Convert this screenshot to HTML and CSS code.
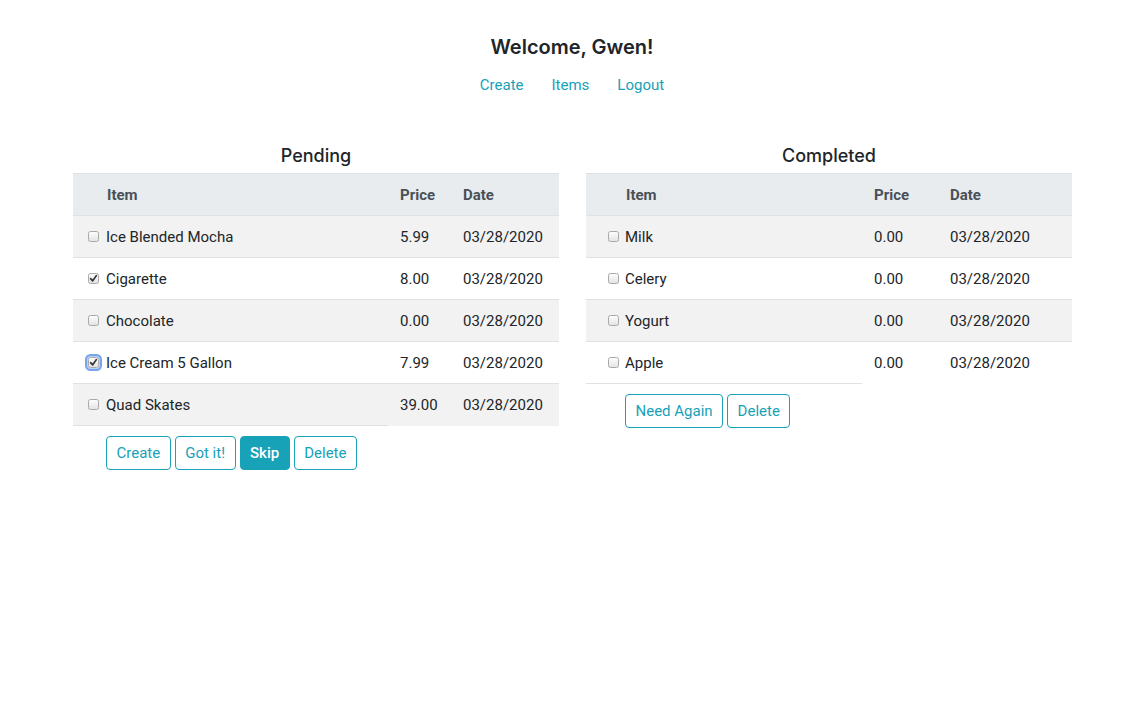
FILE: index.html
```html
<!DOCTYPE html>
<html lang="en">
<head>
<meta charset="utf-8">
<title>Shopping List</title>
<link rel="stylesheet" href="styles.css">
</head>
<body>
<header class="top">
  <h1 class="welcome">Welcome, Gwen!</h1>
  <nav class="nav">
    <a href="#" class="nav-link">Create</a>
    <a href="#" class="nav-link">Items</a>
    <a href="#" class="nav-link">Logout</a>
  </nav>
</header>
<main class="boards">
  <section class="board">
    <h2 class="board-title">Pending</h2>
    <table class="list list-pending">
      <colgroup>
        <col class="c-check"><col class="c-item"><col class="c-price"><col class="c-date">
      </colgroup>
      <thead>
        <tr><th></th><th class="th-item">Item</th><th>Price</th><th>Date</th></tr>
      </thead>
      <tbody>
        <tr><td class="td-check"><span class="cb"></span></td><td class="td-item">Ice Blended Mocha</td><td>5.99</td><td>03/28/2020</td></tr>
        <tr><td class="td-check"><span class="cb cb-on"><svg viewBox="0 0 11 11" width="11" height="11"><path d="M2.6 5.6 L4.6 7.9 L8.4 2.6" fill="none" stroke="#3a3a3a" stroke-width="1.7" stroke-linecap="round" stroke-linejoin="round"/></svg></span></td><td class="td-item">Cigarette</td><td>8.00</td><td>03/28/2020</td></tr>
        <tr><td class="td-check"><span class="cb"></span></td><td class="td-item">Chocolate</td><td>0.00</td><td>03/28/2020</td></tr>
        <tr><td class="td-check"><span class="cb cb-on cb-focus"><svg viewBox="0 0 11 11" width="11" height="11"><path d="M2.6 5.6 L4.6 7.9 L8.4 2.6" fill="none" stroke="#3a3a3a" stroke-width="1.7" stroke-linecap="round" stroke-linejoin="round"/></svg></span></td><td class="td-item">Ice Cream 5 Gallon</td><td>7.99</td><td>03/28/2020</td></tr>
        <tr><td class="td-check"><span class="cb"></span></td><td class="td-item">Quad Skates</td><td>39.00</td><td>03/28/2020</td></tr>
      </tbody>
      <tfoot>
        <tr>
          <td class="td-foot"></td>
          <td class="td-foot td-actions">
            <div class="actions">
              <button class="btn">Create</button>
              <button class="btn">Got it!</button>
              <button class="btn btn-solid">Skip</button>
              <button class="btn">Delete</button>
            </div>
          </td>
        </tr>
      </tfoot>
    </table>
  </section>
  <section class="board">
    <h2 class="board-title">Completed</h2>
    <table class="list list-completed">
      <colgroup>
        <col class="c-check"><col class="c-item"><col class="c-price"><col class="c-date">
      </colgroup>
      <thead>
        <tr><th></th><th class="th-item">Item</th><th>Price</th><th>Date</th></tr>
      </thead>
      <tbody>
        <tr><td class="td-check"><span class="cb"></span></td><td class="td-item">Milk</td><td>0.00</td><td>03/28/2020</td></tr>
        <tr><td class="td-check"><span class="cb"></span></td><td class="td-item">Celery</td><td>0.00</td><td>03/28/2020</td></tr>
        <tr><td class="td-check"><span class="cb"></span></td><td class="td-item">Yogurt</td><td>0.00</td><td>03/28/2020</td></tr>
        <tr><td class="td-check"><span class="cb"></span></td><td class="td-item">Apple</td><td>0.00</td><td>03/28/2020</td></tr>
      </tbody>
      <tfoot>
        <tr>
          <td class="td-foot"></td>
          <td class="td-foot td-actions">
            <div class="actions">
              <button class="btn">Need Again</button>
              <button class="btn">Delete</button>
            </div>
          </td>
        </tr>
      </tfoot>
    </table>
  </section>
</main>
</body>
</html>
```

FILE: styles.css
```css
* { box-sizing: border-box; }

body {
  margin: 0;
  font-family: Roboto, "Noto Sans", sans-serif;
  font-size: 15px;
  color: #212529;
  background: #fff;
}

.top {
  padding: 33px 0 0 5px;
  text-align: center;
}

.welcome {
  margin: 0;
  font-family: Inter, Roboto, sans-serif;
  font-size: 20px;
  line-height: 28px;
  font-weight: 600;
}

.nav {
  display: flex;
  justify-content: center;
  gap: 28px;
  margin-top: 13px;
}

.nav-link {
  color: #17a2b8;
  text-decoration: none;
  font-size: 15px;
  line-height: 22px;
}

.boards {
  display: flex;
  gap: 27px;
  padding-left: 73px;
  margin-top: 49px;
}

.board {
  width: 486px;
}

.board-title {
  margin: 0 0 6px;
  text-align: center;
  font-family: Inter, Roboto, sans-serif;
  font-size: 18px;
  line-height: 22px;
  font-weight: 500;
}

.list {
  width: 486px;
  border-collapse: collapse;
  table-layout: fixed;
}

.list-pending .c-check { width: 28px; }
.list-pending .c-item { width: 287px; }
.list-pending .c-price { width: 63px; }
.list-pending .c-date { width: 108px; }

.list-completed .c-check { width: 34px; }
.list-completed .c-item { width: 242px; }
.list-completed .c-price { width: 76px; }
.list-completed .c-date { width: 134px; }

.list th,
.list td {
  border-top: 1px solid #dee2e6;
  padding: 11px 12px 9px;
  line-height: 21px;
  text-align: left;
  vertical-align: top;
  white-space: nowrap;
}

.list thead th {
  background: #e9ecef;
  color: #495057;
  font-weight: 700;
}

.list tbody tr:nth-child(odd) {
  background: #f2f2f2;
}

.list .th-item { padding-left: 6px; }
.list .td-item { padding-left: 5px; }

.list .td-check {
  padding: 15px 0 0 15px;
}
.list-completed .td-check { padding-left: 22px; }

.cb {
  display: block;
  width: 11px;
  height: 11px;
  border: 1px solid #a9a9a9;
  border-radius: 2.5px;
  background: linear-gradient(#fdfdfd, #e4e4e4);
  position: relative;
}

.cb svg {
  position: absolute;
  left: -1px;
  top: -1px;
}

.cb-focus {
  box-shadow: 0 0 0 1px #b9d1f7, 0 0 0 3px #78a4ee;
}

.list .td-foot {
  padding: 10px 0 0 0;
}
.list .td-actions { padding-left: 5px; }

.actions {
  display: flex;
  gap: 4px;
}

.btn {
  font-family: inherit;
  font-size: 15px;
  line-height: 22px;
  padding: 5px 9.5px;
  border: 1px solid #17a2b8;
  border-radius: 4px;
  background: #fff;
  color: #17a2b8;
  cursor: pointer;
}

.btn-solid {
  background: #17a2b8;
  color: #fff;
  font-weight: 500;
}
```
